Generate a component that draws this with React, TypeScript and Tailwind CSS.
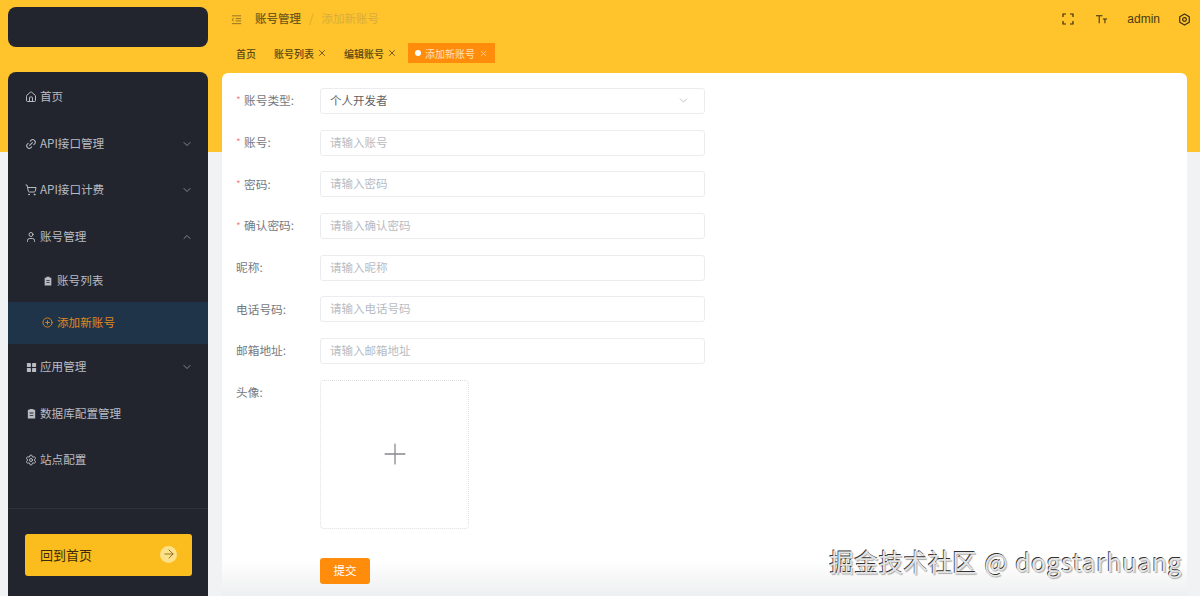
import { ChevronDown, ChevronUp, CirclePlus, House, Link2, ShoppingCart, User, Settings, X, ArrowRight, Plus } from "lucide-react";
import type { ReactNode } from "react";

const cjk = "font-['Noto_Sans_CJK_SC','Liberation_Sans',sans-serif]";

function ClipIcon({ className = "" }: { className?: string }) {
  return (
    <svg viewBox="0 0 12 12" className={className} fill="currentColor">
      <path d="M4 1h4v1h2v9.5H2V2h2z" />
      <path d="M4 5h4v1H4zM4 7.5h4v1H4z" fill="#22252e" />
    </svg>
  );
}

function GridIcon() {
  return (
    <svg viewBox="0 0 12 12" className="w-[11px] h-[11px]" fill="currentColor">
      <rect x="1" y="1" width="4.4" height="4.4" rx="0.5" />
      <rect x="6.6" y="1" width="4.4" height="4.4" rx="0.5" />
      <rect x="1" y="6.6" width="4.4" height="4.4" rx="0.5" />
      <rect x="6.6" y="6.6" width="4.4" height="4.4" rx="0.5" />
    </svg>
  );
}

function HexIcon({ className = "" }: { className?: string }) {
  return (
    <svg viewBox="0 0 12 12" className={className} fill="none" stroke="currentColor" strokeWidth="1.1">
      <path d="M6 1 10.4 3.5v5L6 11 1.6 8.5v-5z" strokeLinejoin="round" />
      <circle cx="6" cy="6" r="1.7" />
    </svg>
  );
}

function MenuRow({ icon, label, arrow }: { icon: ReactNode; label: string; arrow?: "down" | "up" }) {
  return (
    <div className="h-[46.5px] flex items-center pl-[17px] pr-[15px] text-[11.6px] text-[#b9bcc2]">
      <span className="w-[12px] flex justify-center mr-[3px]">{icon}</span>
      <span className="flex-1">{label}</span>
      {arrow === "down" && <ChevronDown className="w-[12px] h-[12px] text-[#a4a7ad]" strokeWidth={1.5} />}
      {arrow === "up" && <ChevronUp className="w-[12px] h-[12px] text-[#a4a7ad]" strokeWidth={1.5} />}
    </div>
  );
}

function Field({ label, required, placeholder, value }: { label: string; required?: boolean; placeholder?: string; value?: string }) {
  return (
    <div className="flex items-center mb-[15.7px] h-[26px]">
      <label className="w-[84px] pb-[2px] flex items-center text-[11.7px] text-[#76797e]">
        {required && <span className="w-[8px] text-[#f08a8a] text-[10px]">*</span>}
        {label}:
      </label>
      <div className="w-[385px] h-[26px] rounded-[3px] border border-[#eaecef] bg-white flex items-center pl-[9px] pr-[14px] pb-[1px] text-[11.5px]">
        {value ? (
          <>
            <span className="flex-1 text-[#606266]">{value}</span>
            <ChevronDown className="w-[13px] h-[13px] text-[#a8abb0]" strokeWidth={1.3} />
          </>
        ) : (
          <span className="text-[#b8bbc1]">{placeholder}</span>
        )}
      </div>
    </div>
  );
}

function Tab({ label, close = true }: { label: string; close?: boolean }) {
  return (
    <div className="flex items-center h-[20px] px-[8px] text-[10px] text-[#5a4712] font-medium">
      {label}
      {close && <X className="w-[10px] h-[10px] ml-[3px]" strokeWidth={2} />}
    </div>
  );
}

export default function App() {
  return (
    <div className={`${cjk} h-[596px] w-[1200px] overflow-hidden flex bg-[linear-gradient(#ffc32c_152px,#f1f2f4_152px)]`}>
      {/* left column */}
      <div className="w-[222px] pl-[8px] pr-[14px] pt-[7px] flex flex-col shrink-0">
        <div className="h-[41px] rounded-[8px] bg-[#22252e]" />
        <aside className="mt-[25px] h-[540px] pt-[2px] rounded-t-[8px] bg-[#22252e] flex flex-col">
          <MenuRow icon={<House className="w-[12px] h-[12px]" />} label="首页" />
          <MenuRow icon={<Link2 className="w-[12px] h-[12px] -rotate-45" />} label="API接口管理" arrow="down" />
          <MenuRow icon={<ShoppingCart className="w-[12px] h-[12px]" />} label="API接口计费" arrow="down" />
          <MenuRow icon={<User className="w-[12px] h-[12px]" />} label="账号管理" arrow="up" />
          <div className="h-[42px] flex items-center pl-[35px] text-[11.6px] text-[#b9bcc2]">
            <ClipIcon className="w-[10px] h-[10px] mr-[4px]" />
            账号列表
          </div>
          <div className="h-[42px] flex items-center pl-[34px] text-[11.6px] text-[#e08a1e] bg-[#1f3349]">
            <CirclePlus className="w-[11px] h-[11px] mr-[4px]" />
            添加新账号
          </div>
          <MenuRow icon={<GridIcon />} label="应用管理" arrow="down" />
          <MenuRow icon={<ClipIcon className="w-[11px] h-[11px]" />} label="数据库配置管理" />
          <MenuRow icon={<Settings className="w-[12px] h-[12px]" />} label="站点配置" />
          <div className="mt-[25px] border-t border-[#2e3139] pl-[17px] pr-[16px] pt-[25px]">
            <div className="h-[42px] pb-[2px] rounded-[3px] bg-[#fbbc1e] flex items-center justify-between pl-[15px] pr-[15px] text-[13px] text-[#3a2c08]">
              回到首页
              <span className="w-[17px] h-[17px] rounded-full bg-[#fde08a] flex items-center justify-center">
                <ArrowRight className="w-[14px] h-[14px] text-[#7a5c12]" strokeWidth={1.4} />
              </span>
            </div>
          </div>
        </aside>
      </div>

      {/* right column */}
      <div className="w-[965px] flex flex-col shrink-0">
        <header className="h-[38px] flex items-center pl-[9px] text-[11.5px] w-[969px]">
          <svg viewBox="0 0 12 12" className="w-[11px] h-[11px] text-[#8a7020]" fill="none" stroke="currentColor" strokeWidth="1">
            <path d="M1 2h10M5 5h6M5 7.5h6M1 10.5h10" />
            <path d="M3 4.5 1 6.2l2 1.6" />
          </svg>
          <span className="ml-[13px] text-[#6e5a1a] font-medium">账号管理</span>
          <span className="mx-[8px] text-[#dba82a]">/</span>
          <span className="text-[#d9ad3e]">添加新账号</span>
          <div className="flex-1" />
          <svg viewBox="0 0 12 12" className="w-[12px] h-[12px] text-[#3a2f10]" fill="none" stroke="currentColor" strokeWidth="1.2">
            <path d="M1 4V1h3M8 1h3v3M11 8v3H8M4 11H1V8" />
          </svg>
          <svg viewBox="0 0 14 12" className="ml-[21px] w-[13px] h-[12px] text-[#3a2f10]" fill="none" stroke="currentColor" strokeWidth="1.1">
            <path d="M1 2.5h7M4.5 2.5V10.5M8.5 6h4.5M10.7 6v4.5" />
          </svg>
          <span className="ml-[19px] text-[12px] text-[#4a3c12] font-['Liberation_Sans',sans-serif]">admin</span>
          <HexIcon className="ml-[18px] w-[13px] h-[13px] text-[#3a2f10]" />
        </header>
        <nav className="h-[20px] mt-[5px] flex items-center pl-[6px]">
          <Tab label="首页" close={false} />
          <div className="w-[2px]" />
          <Tab label="账号列表" />
          <div className="w-[1px]" />
          <Tab label="编辑账号" />
          <div className="ml-[3px] h-[20px] w-[87px] bg-[#ff8c0a] flex items-center pl-[7px] text-[10px] text-[#ffe2b8]">
            <span className="w-[6px] h-[6px] rounded-full bg-white mr-[4px]" />
            添加新账号
            <X className="w-[9px] h-[9px] ml-[4px] text-[#ffe9cc]" strokeWidth={1.6} />
          </div>
        </nav>
        <main className="relative mt-[10px] h-[523px] overflow-hidden rounded-t-[6px] bg-white pt-[15px] pl-[14px]">
          <Field required label="账号类型" value="个人开发者" />
          <Field required label="账号" placeholder="请输入账号" />
          <Field required label="密码" placeholder="请输入密码" />
          <Field required label="确认密码" placeholder="请输入确认密码" />
          <Field label="昵称" placeholder="请输入昵称" />
          <Field label="电话号码" placeholder="请输入电话号码" />
          <Field label="邮箱地址" placeholder="请输入邮箱地址" />
          <div className="flex items-start">
            <label className="w-[84px] pt-[3px] text-[11.7px] text-[#76797e]">头像:</label>
            <div className="w-[149px] h-[149px] rounded-[4px] border border-dotted border-[#dcdee2] flex items-center justify-center">
              <Plus className="w-[34px] h-[34px] text-[#85888d]" strokeWidth={0.9} />
            </div>
          </div>
          <div className="ml-[84px] mt-[29px] relative z-10 w-[50px] h-[26px] rounded-[3px] bg-[#ff8c0a] text-white text-[11.5px] flex items-center justify-center">
            提交
          </div>
          {/* bottom fade */}
          <div className="absolute inset-x-0 bottom-0 h-[36px] bg-gradient-to-b from-white to-[#eeeff0]" />
          <div className="absolute right-[5px] top-[471px] z-20 text-[24.6px] leading-[34px] whitespace-nowrap text-[#e4e4e4] [word-spacing:2px] [text-shadow:-0.7px_-0.7px_0.6px_#333,1px_1px_1px_#aaa]">
            掘金技术社区 @ <span className="tracking-[0.6px]">dogstarhuang</span>
          </div>
        </main>
      </div>
    </div>
  );
}
